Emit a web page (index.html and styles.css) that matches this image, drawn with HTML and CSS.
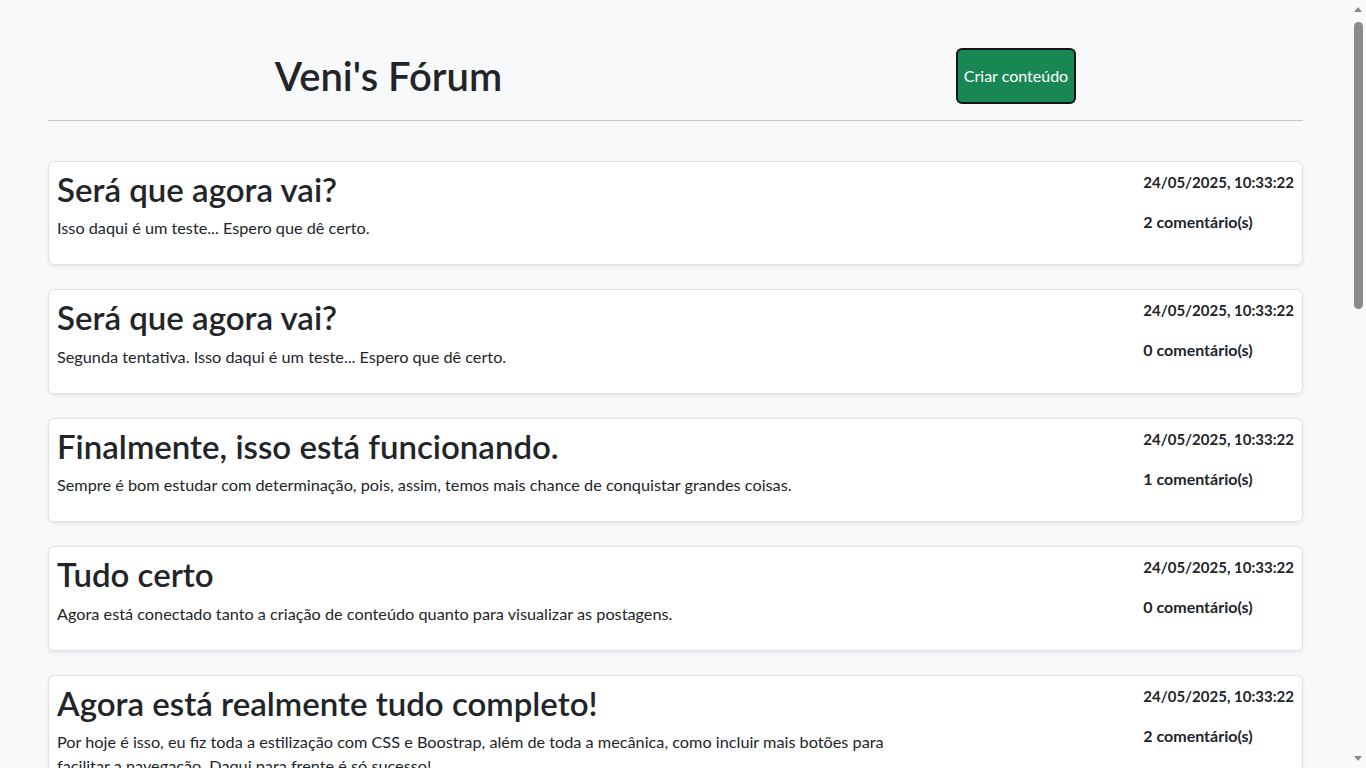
FILE: index.html
```html
<!DOCTYPE html>
<html lang="pt-BR">
<head>
<meta charset="utf-8">
<title>Veni's Fórum</title>
<link rel="stylesheet" href="styles.css">
</head>
<body>
<div class="page">
  <header class="topbar">
    <h1 class="brand">Veni's Fórum</h1>
    <button class="btn-create" type="button">Criar conteúdo</button>
  </header>
  <hr class="divider">
  <main class="posts">
    <article class="post">
      <div class="post-main">
        <h2 class="post-title">Será que agora vai?</h2>
        <p class="post-text">Isso daqui é um teste... Espero que dê certo.</p>
      </div>
      <div class="post-meta">
        <p class="meta-date">24/05/2025, 10:33:22</p>
        <p class="meta-count">2 comentário(s)</p>
      </div>
    </article>
    <article class="post">
      <div class="post-main">
        <h2 class="post-title">Será que agora vai?</h2>
        <p class="post-text">Segunda tentativa. Isso daqui é um teste... Espero que dê certo.</p>
      </div>
      <div class="post-meta">
        <p class="meta-date">24/05/2025, 10:33:22</p>
        <p class="meta-count">0 comentário(s)</p>
      </div>
    </article>
    <article class="post">
      <div class="post-main">
        <h2 class="post-title">Finalmente, isso está funcionando.</h2>
        <p class="post-text">Sempre é bom estudar com determinação, pois, assim, temos mais chance de conquistar grandes coisas.</p>
      </div>
      <div class="post-meta">
        <p class="meta-date">24/05/2025, 10:33:22</p>
        <p class="meta-count">1 comentário(s)</p>
      </div>
    </article>
    <article class="post">
      <div class="post-main">
        <h2 class="post-title">Tudo certo</h2>
        <p class="post-text">Agora está conectado tanto a criação de conteúdo quanto para visualizar as postagens.</p>
      </div>
      <div class="post-meta">
        <p class="meta-date">24/05/2025, 10:33:22</p>
        <p class="meta-count">0 comentário(s)</p>
      </div>
    </article>
    <article class="post">
      <div class="post-main">
        <h2 class="post-title">Agora está realmente tudo completo!</h2>
        <p class="post-text">Por hoje é isso, eu fiz toda a estilização com CSS e Boostrap, além de toda a mecânica, como incluir mais botões para facilitar a navegação. Daqui para frente é só sucesso!</p>
      </div>
      <div class="post-meta">
        <p class="meta-date">24/05/2025, 10:33:22</p>
        <p class="meta-count">2 comentário(s)</p>
      </div>
    </article>
  </main>
</div>
<div class="fake-scrollbar" aria-hidden="true">
  <span class="sb-arrow sb-up"></span>
  <span class="sb-thumb"></span>
  <span class="sb-arrow sb-down"></span>
</div>
</body>
</html>
```
FILE: styles.css
```css
* { box-sizing: border-box; }

html, body {
  margin: 0;
  padding: 0;
}

html {
  overflow: hidden;
  height: 100%;
}

body {
  background: #f8f9fa;
  color: #212529;
  font-family: "Lato", "Noto Sans", sans-serif;
  font-size: 16px;
  line-height: 24px;
  padding-right: 15px;
  height: 100%;
  overflow: hidden;
}

.page {
  margin: 48px 48px 0;
}

.topbar {
  display: flex;
  justify-content: space-around;
  align-items: center;
  height: 56px;
}

.brand {
  margin: 0;
  font-size: 40px;
  font-weight: 600;
  line-height: 48px;
}

.btn-create {
  font-family: inherit;
  font-size: 16px;
  line-height: 24px;
  color: #fff;
  background: #198754;
  border: 2px solid #111418;
  border-radius: 6px;
  padding: 14px 6px;
  cursor: pointer;
}

.divider {
  margin: 16px 0 0;
  border: 0;
  border-top: 1px solid #c6c7c8;
  height: 0;
}

.posts {
  display: flex;
  flex-direction: column;
  gap: 24px;
  padding-top: 40px;
}

.post {
  display: flex;
  justify-content: space-between;
  align-items: flex-start;
  background: #fff;
  border: 1px solid #dee2e6;
  border-radius: 6px;
  box-shadow: 0 2px 4px rgba(0, 0, 0, 0.075);
  padding: 8px;
}

.post-main {
  flex: 0 0 68%;
}

.post-title {
  margin: 0 0 8px;
  font-size: 33px;
  font-weight: 600;
  line-height: 38.4px;
}

.post-text {
  margin: 0 0 16px;
  font-size: 16.25px;
}

.post-meta {
  flex: 0 0 auto;
}

.meta-date,
.meta-count {
  margin: 0 0 16px;
  font-size: 15px;
  font-weight: 700;
}

.meta-count {
  margin: 0;
  font-size: 16px;
}

/* imitation of the browser's vertical scrollbar */
.fake-scrollbar {
  position: fixed;
  top: 0;
  right: 0;
  width: 15px;
  height: 100%;
  background: #f9f9fa;
}

.sb-thumb {
  position: absolute;
  left: 3px;
  top: 22px;
  width: 9px;
  height: 287px;
  border-radius: 5px;
  background: #8b8b8b;
}

.sb-arrow {
  position: absolute;
  left: 3px;
  width: 0;
  height: 0;
  border-left: 4.5px solid transparent;
  border-right: 4.5px solid transparent;
}

.sb-up {
  top: 7px;
  border-bottom: 5px solid #8b8b8b;
}

.sb-down {
  bottom: 7px;
  border-top: 5px solid #8b8b8b;
}
```
